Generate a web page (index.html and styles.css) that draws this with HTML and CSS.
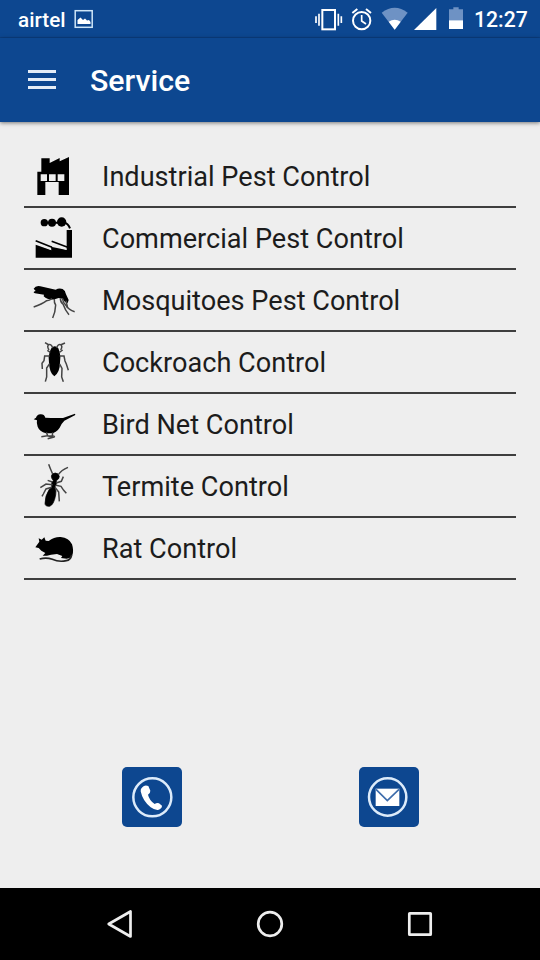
FILE: index.html
```html
<!DOCTYPE html>
<html lang="en">
  <head>
    <meta charset="UTF-8" />
    <meta name="viewport" content="width=device-width, initial-scale=1.0" />
    <title>Service</title>
    <link rel="stylesheet" href="styles.css">
  </head>
  <body>
    <div class="status-bar">
      <span class="carrier">airtel</span>
      <svg class="picture" width="20" height="20" viewBox="0 0 20 20">
        <rect x="1.2" y="1.7" width="17" height="16.6" fill="none" stroke="#cfe6f8" stroke-width="1.5" />
        <path d="M3.5 15v-4l3-2.500 2.500 2.500 2-1.500 2 2 2-.5 1.500 2v2z" fill="#fff" />
      </svg>
      <svg class="system-icons" width="150" height="38" viewBox="0 0 450 114">
        <!-- vibrate -->
        <rect x="22" y="30" width="38" height="58" fill="none" stroke="#fff" stroke-width="6" />
        <path d="M12 41v36M3 49v20M70 41v36M79 49v20" stroke="#fff" stroke-width="5" />
        <!-- alarm -->
        <circle cx="140" cy="62" r="26" fill="none" stroke="#fff" stroke-width="6" />
        <path d="M140 45v18l13 9" fill="none" stroke="#fff" stroke-width="5" />
        <path d="M112 39l15-12M153 27l15 12" stroke="#fff" stroke-width="6" />
        <!-- wifi -->
        <path d="M200 38Q239 8 278 38L239 89z" fill="#6e92c4" />
        <path d="M221 65q18-12 36 0l-18 24z" fill="#fff" />
        <!-- signal -->
        <path d="M364 24v66h-67z" fill="#fff" />
        <!-- battery -->
        <path d="M402 28h13v-6h16v6h13v34h-42z" fill="#6e92c4" />
        <path d="M402 61h42v26h-42z" fill="#fff" />
      </svg>
      <span class="clock">12:27</span>
    </div>

    <header class="toolbar">
      <div class="menu-btn"><i></i><i></i><i></i></div>
      <h1>Service</h1>
    </header>

    <main>
      <ul class="service-list">
        <li>
          <svg class="icon" viewBox="36 27 132 132">
            <path fill-rule="evenodd" d="M64 40h25v14l30-15v10l28-13v114h-31v-39H76v39H52V80h12zM62 88v20h19V88zM87 88v20h20V88zM113 88v20h20V88z" />
          </svg>
          <span>Industrial Pest Control</span>
        </li>
        <li>
          <svg class="icon" viewBox="36 213 132 132">
            <path d="M47 299l47 17-1-11 47 10V255h16v83H47z" />
            <path d="M47 287l49 20M95 289l48 18" stroke="#000" stroke-width="5" />
            <path d="M50 296l43 17M98 299l41 14" stroke="#eee" stroke-width="3" />
            <circle cx="73" cy="233" r="11" />
            <circle cx="96" cy="233" r="12" />
            <circle cx="125" cy="231" r="14" />
            <path d="M73 233h50M134 233q10 2 16 17" fill="none" stroke="#000" stroke-width="6" />
          </svg>
          <span>Commercial Pest Control</span>
        </li>
        <li>
          <svg class="icon" viewBox="36 24 132 132">
            <path d="M41 56q6-10 20-7l46 10q10-6 21-2 9 5 10 16l8 17-3 9-8-3-7-10-12-2-12 4q-20 3-33-9l1-5-27-4q-9-4 2-7z" />
            <g class="legs">
              <path d="M96 86q-8 6-16 6-14 11-39 19" />
              <path d="M103 87q-1 12 4 18-1 22-9 39" />
              <path d="M121 85q1 13 8 17 7 20 18 32" />
              <path d="M127 84q2 14 9 20 10 16 28 21" />
              <path d="M138 92l5 22" />
            </g>
          </svg>
          <span>Mosquitoes Pest Control</span>
        </li>
        <li>
          <svg class="icon" viewBox="36 210 132 132">
            <path d="M94 235q10-13 21 0l4 11q4 15 1 31 0 30-17 42-15-11-16-41-3-19 2-33z" />
            <g class="legs">
              <path d="M98 234q-4-13-12-10-6 5 1 16M87 225l-12-7" />
              <path d="M110 234q4-13 12-10 7 5 0 16M121 225l14-6" />
              <path d="M91 247l-9-6M118 247l10-7" />
              <path d="M89 258H74l-2 14-6 8 1 17" />
              <path d="M119 258h13l3 15 4 9 6 19" />
              <path d="M89 281l-9 13v27l-4 14M119 282l7 13-1 26 5 14" />
            </g>
          </svg>
          <span>Cockroach Control</span>
        </li>
        <li>
          <svg class="icon" viewBox="36 21 132 132">
            <path d="M41 73l7-5q3-9 13-10 12-1 15 10 25 2 53 1l36-13 1 4-33 17q-10 10-14 21-10 16-27 17H78q-20-6-25-20-4-10-2-19z" />
            <g class="legs">
              <path d="M79 112l4 10-19 3M83 122l15 5-15 4M98 112l-1 10-15 1M97 122l8 3" />
            </g>
          </svg>
          <span>Bird Net Control</span>
        </li>
        <li>
          <svg class="icon" viewBox="36 207 132 132">
            <path d="M94 243q2-9 12-9 11 1 12 11-1 8-9 12 3 9-3 15l-1 7q5 9 2 21-5 29-18 34-14 1-14-9 0-23 13-42l7-8 0-10q0-5 5-8-6-6-6-14z" stroke="#000" stroke-width="2" />
            <g class="legs">
              <path d="M98 237q-7-15-12-29M115 239q9-14 29-22" stroke="#777" />
              <path d="M97 261l-14-5M98 269l-20-2-17 11M95 277l-17 5-8 15-4 7" />
              <path d="M108 264l16-5 6-14M108 271l15 3 8 12 8 9M105 277l11 14 2 28" />
            </g>
          </svg>
          <span>Termite Control</span>
        </li>
        <li>
          <svg class="icon" viewBox="36 393 132 132">
            <path d="M46 457l12-17-2-10 9 4 8-7 4 10 9 1q17-13 36-12 25 2 34 22 6 19 1 33-6 9-17 10l-17-2 4-6-16-6-18 2-12 3H68l8-8-12-7-8-8z" />
            <path d="M59 492q20-6 38 1 20 9 42 4 13-2 16-17" fill="none" stroke="#222" stroke-width="5" />
          </svg>
          <span>Rat Control</span>
        </li>
      </ul>

      <div class="contact">
        <div class="contact-btn">
          <svg viewBox="0 0 180 180">
            <circle cx="91" cy="91" r="57" />
            <path d="M61 61q7-9 18-4l6 14q0 8-7 12 4 17 20 28 7-5 13-2l9 7q0 9-12 13-9 1-22-8-24-19-30-48-1-7 5-12z" fill="#fff" />
          </svg>
        </div>
        <div class="contact-btn">
          <svg viewBox="0 0 180 180">
            <circle cx="86" cy="90" r="56" />
            <path d="M50 65h71v52H50z" fill="#fff" />
            <path d="M51 67l34 34 35-34" fill="none" stroke="#3d6cab" stroke-width="5" />
          </svg>
        </div>
      </div>
    </main>

    <nav class="nav-bar">
      <svg width="30" height="30" viewBox="0 0 30 30"><path d="M3.700 15L25.500 2.500v25z" /></svg>
      <svg width="30" height="30" viewBox="0 0 30 30"><circle cx="15" cy="15" r="11.800" /></svg>
      <svg width="30" height="30" viewBox="0 0 30 30"><rect x="4.300" y="4.300" width="21.400" height="21.400" rx=".5" /></svg>
    </nav>
  </body>
</html>
```

FILE: styles.css
```css
* {
  box-sizing: border-box;
}

body {
  margin: 0;
  height: 960px;
  display: flex;
  flex-direction: column;
  overflow: hidden;
  background-color: #eeeeee;
  font-family: Roboto, "Liberation Sans", sans-serif;
}

.status-bar {
  display: flex;
  align-items: center;
  height: 38px;
  padding: 0 12px 0 18px;
  background-color: #0d4790;
  border-bottom: 1px solid #0b3f83;
  color: #fff;
  font-weight: 500;
}

.carrier {
  padding-top: 2px;
  font-size: 20.700px;
}

.picture {
  margin-left: 8px;
}

.system-icons {
  margin-left: auto;
}

.clock {
  width: 54px;
  margin-left: 9px;
  padding-top: 2px;
  font-size: 21.200px;
  white-space: nowrap;
}

.toolbar {
  display: flex;
  align-items: center;
  height: 84px;
  padding-left: 28px;
  background-color: #0d4790;
  color: #fff;
  box-shadow: 0 1px 4px rgba(0, 0, 0, 0.5);
}

.toolbar h1 {
  margin: 0 0 0 34px;
  font-size: 30.300px;
  font-weight: 500;
}

.menu-btn {
  display: flex;
  flex-direction: column;
  gap: 5px;
  width: 28px;
  padding-bottom: 2px;
}

.menu-btn i {
  height: 3px;
  background-color: #e4edf7;
}

main {
  flex: 1;
  padding: 24px 24px 0;
}

.service-list {
  margin: 0;
  padding: 0;
  list-style: none;
}

.service-list li {
  display: flex;
  align-items: center;
  height: 62px;
  padding-left: 8px;
  border-bottom: 2px solid #3e3e3e;
  color: #1c1c1c;
  font-size: 27.130px;
}

.service-list span {
  padding-top: 2px;
}

.icon {
  width: 44px;
  height: 44px;
  margin-right: 26px;
}

.legs path {
  fill: none;
  stroke: #444;
  stroke-width: 4.500;
}

.contact {
  display: flex;
  gap: 177px;
  margin: 187px 0 0 98px;
}

.contact-btn {
  width: 60px;
  height: 60px;
  border-radius: 5px;
  background-color: #0d4790;
}

.contact-btn svg {
  display: block;
}

.contact-btn circle {
  fill: none;
  stroke: #dcebfa;
  stroke-width: 7.500;
}

.nav-bar {
  display: flex;
  justify-content: space-between;
  align-items: center;
  height: 72px;
  padding: 0 105px;
  background-color: #000;
}

.nav-bar svg {
  fill: none;
  stroke: #eee;
  stroke-width: 2.700;
  stroke-linejoin: round;
}
```
